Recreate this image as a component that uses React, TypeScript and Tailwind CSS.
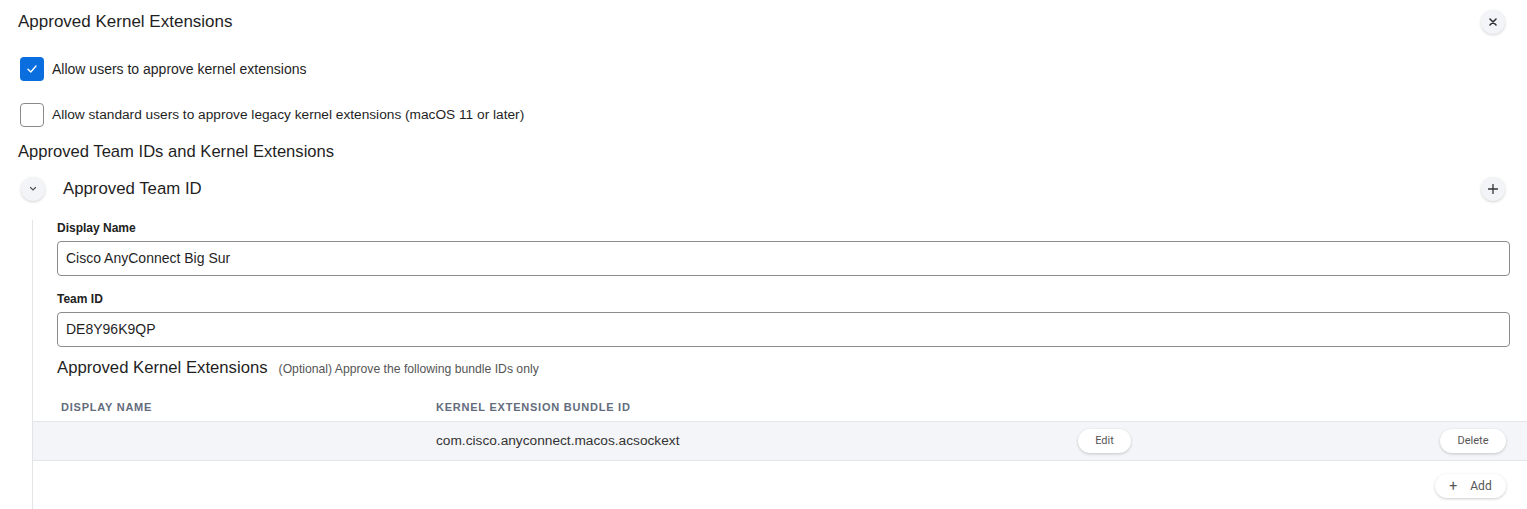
import React from "react";

const font = { fontFamily: '"Liberation Sans", Arial, sans-serif' };

function RoundBtn({ children }: { children: React.ReactNode }) {
  return (
    <button className="w-6 h-6 rounded-full bg-[#f3f4f7] shadow-[0_1px_3px_rgba(0,0,0,0.18)] flex items-center justify-center text-[#333]">
      {children}
    </button>
  );
}

function PillBtn({ children, w }: { children: React.ReactNode; w: string }) {
  return (
    <button
      className={`${w} h-6 rounded-full bg-white shadow-[0_1px_3px_rgba(0,0,0,0.2)] flex items-center justify-center text-[11px] text-[#555] font-[Roboto,sans-serif]`}
    >
      {children}
    </button>
  );
}

export default function App() {
  return (
    <div className="w-[1527px] h-[509px] bg-white text-[#1f1f1f] overflow-hidden" style={font}>
      <div className="flex items-center justify-between pl-[18px] pr-[22px] mt-[10px] h-6">
        <h1 className="text-[17px] leading-[24px]">Approved Kernel Extensions</h1>
        <RoundBtn>
          <svg width="8" height="8" viewBox="0 0 8 8" stroke="#333" strokeWidth="1.6" strokeLinecap="round">
            <path d="M1 1L7 7M7 1L1 7" />
          </svg>
        </RoundBtn>
      </div>

      <div className="pl-5 mt-[23px] flex items-center gap-2 h-6">
        <span className="w-6 h-6 rounded-[4px] bg-[#0a6edf] flex items-center justify-center">
          <svg width="12" height="10" viewBox="0 0 12 10" fill="none" stroke="white" strokeWidth="1.4" strokeLinecap="round" strokeLinejoin="round">
            <path d="M2 5.2L4.8 8L10 2" />
          </svg>
        </span>
        <span className="text-[14px]">Allow users to approve kernel extensions</span>
      </div>

      <div className="pl-5 mt-[22px] flex items-center gap-2 h-6">
        <span className="w-6 h-6 rounded-[4px] border border-[#8a8a8a] bg-white" />
        <span className="text-[13.7px]">Allow standard users to approve legacy kernel extensions (macOS 11 or later)</span>
      </div>

      <h2 className="pl-[18px] mt-[13px] text-[16.6px] leading-[24px]">Approved Team IDs and Kernel Extensions</h2>

      <div className="flex items-center justify-between pl-[21px] pr-[22px] mt-[13px] h-6">
        <div className="flex items-center gap-[18px]">
          <RoundBtn>
            <svg width="8" height="6" viewBox="0 0 8 6" fill="none" stroke="#555" strokeWidth="1.2" strokeLinecap="round">
              <path d="M1.5 1.5L4 4L6.5 1.5" />
            </svg>
          </RoundBtn>
          <span className="text-[16.8px]">Approved Team ID</span>
        </div>
        <RoundBtn>
          <svg width="10" height="10" viewBox="0 0 10 10" stroke="#333" strokeWidth="1.3" strokeLinecap="round">
            <path d="M5 0.5V9.5M0.5 5H9.5" />
          </svg>
        </RoundBtn>
      </div>

      <div className="ml-[32px] mt-[19px] border-l border-[#e3e4e8] h-[400px]">
        <div className="pl-[24px] pr-[17px] pt-[1px]">
          <label className="block text-[12px] font-bold text-[#222] leading-[14px]">Display Name</label>
          <div className="mt-[6px] h-[35px] border border-[#8c8c8c] rounded-[4px] flex items-center px-[8px] text-[14px]">
            Cisco AnyConnect Big Sur
          </div>
          <label className="block text-[12px] font-bold text-[#222] leading-[14px] mt-[16px]">Team ID</label>
          <div className="mt-[6px] h-[35px] border border-[#8c8c8c] rounded-[4px] flex items-center px-[8px] text-[14px]">
            DE8Y96K9QP
          </div>
          <div className="mt-[11px] flex items-baseline gap-[11px] h-[20px]">
            <span className="text-[16.7px] leading-[20px]">Approved Kernel Extensions</span>
            <span className="text-[12.2px] text-[#555]">(Optional) Approve the following bundle IDs only</span>
          </div>
        </div>
        <div className="mt-[22px] flex text-[11px] font-bold tracking-[0.07em] text-[#636c7c] uppercase h-[14px] items-center">
          <span className="pl-[28px] w-[403px]">Display Name</span>
          <span>Kernel Extension Bundle ID</span>
        </div>
        <div className="mt-[7px] h-[40px] bg-[#f4f5f9] border-y border-[#e4e6ea] flex items-center">
          <span className="w-[403px]" />
          <span className="text-[13.7px] text-[#333] w-[642px]">com.cisco.anyconnect.macos.acsockext</span>
          <PillBtn w="w-[53px]">Edit</PillBtn>
          <span className="flex-1" />
          <div className="pr-[21px]">
            <PillBtn w="w-[66px]">Delete</PillBtn>
          </div>
        </div>
        <div className="flex justify-end pr-[21px] mt-[13px]">
          <PillBtn w="w-[71px]">
            <span className="text-[14px] mr-[13px] leading-none">+</span>
            <span className="text-[12px]">Add</span>
          </PillBtn>
        </div>
      </div>
    </div>
  );
}
